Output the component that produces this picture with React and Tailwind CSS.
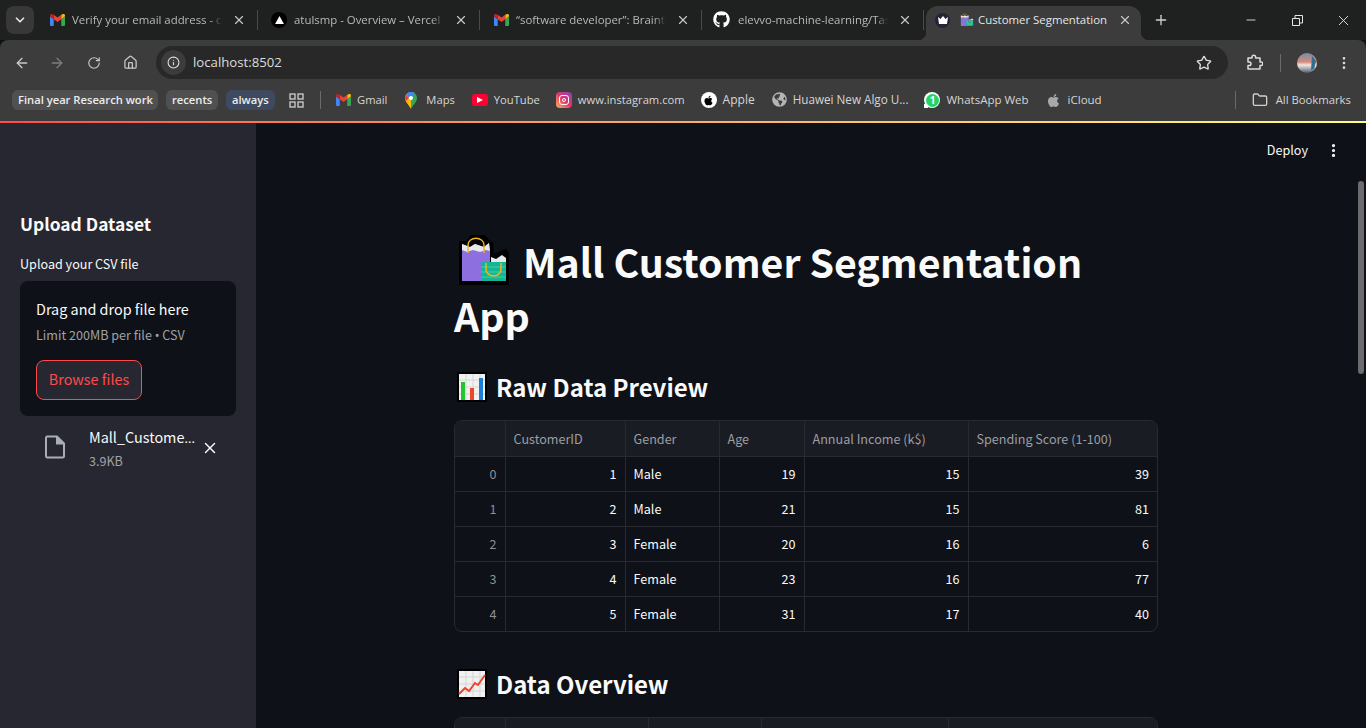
import { ArrowLeft, ArrowRight, ChevronDown, EllipsisVertical, Folder, House, Info, Minus, Plus, RotateCw, Star, X } from "lucide-react";
import { FaApple, FaGithub, FaGlobeAmericas } from "react-icons/fa";

const chromeFont = { fontFamily: '"Open Sans", "Noto Sans", sans-serif' };

function GmailIcon({ size = 15 }) {
  return (
    <svg width={size} height={size * 0.8} viewBox="0 0 20 16" className="shrink-0">
      <path d="M0 3v11.5A1.5 1.5 0 0 0 1.5 16H5V7z" fill="#4285f4" />
      <path d="M15 7v9h3.5a1.5 1.5 0 0 0 1.5-1.5V3z" fill="#34a853" />
      <path d="M15 1v6l5-4V2c0-1.8-2-2.6-3.300-1.600z" fill="#fbbc04" />
      <path d="M5 7V1l5 3.800L15 1v6l-5 3.800z" fill="#ea4335" />
      <path d="M0 2v1l5 4V1L3.300.4C2-.6 0 .2 0 2z" fill="#c5221f" />
    </svg>
  );
}

function VercelIcon() {
  return (
    <span className="w-4 h-4 rounded-full bg-black flex items-center justify-center shrink-0">
      <svg width="9" height="8" viewBox="0 0 10 9"><path d="M5 0l5 9H0z" fill="#fff" /></svg>
    </span>
  );
}

function BagEmoji({ size = 16, outline = false }) {
  return (
    <svg width={size} height={size} viewBox="0 0 50 50" className="shrink-0">
      {outline && <path d="M0 6h7l5-6h14l5 6 3 1 1 12 6-3 6-2 3 4v32H0z" fill="#000" />}
      <path d="M3 9l8 3 5-3 9 3 5-4 1 8v30H3z" fill="#8e6fe0" />
      <path d="M3 9l8 3 5-3 9 3 5-4 1 8-4-1-6 2-7-2-6 2-5-2z" fill="#e8e8ea" />
      <path d="M9 18V10c0-9 16-9 16 0v8" fill="none" stroke="#f2b21b" strokeWidth="1.400" />
      <path d="M32 27v-5l5 2 6-4 4 3v4z" fill="#e8e8ea" />
      <path d="M22 27h25v19H22z" fill="#12b694" />
      <path d="M22 32h25M22 37h25M22 42h25" stroke="#3ccfae" strokeWidth="1.200" />
      <path d="M27 28v6c0 9 15 9 15 0v-6" fill="none" stroke="#f2b21b" strokeWidth="1.600" />
    </svg>
  );
}

function BarEmoji() {
  return (
    <svg width="30" height="30" viewBox="0 0 30 30" className="shrink-0">
      <rect width="30" height="30" fill="#000" />
      <rect x="2" y="2" width="26" height="26" fill="#f1f1f1" />
      <path d="M2 8h26M2 15h26M2 22h26M9 2v26M16 2v26M23 2v26" stroke="#d5d5d5" strokeWidth="1" />
      <rect x="4" y="10" width="4" height="18" fill="#22c52e" />
      <rect x="13" y="16" width="4" height="12" fill="#f0452b" />
      <rect x="22" y="6" width="4" height="22" fill="#1c7ed6" />
    </svg>
  );
}

function LineEmoji() {
  return (
    <svg width="30" height="30" viewBox="0 0 30 30" className="shrink-0">
      <rect width="30" height="30" fill="#000" />
      <rect x="2" y="2" width="26" height="26" fill="#f1f1f1" />
      <path d="M2 8h26M2 15h26M2 22h26M9 2v26M16 2v26M23 2v26" stroke="#d5d5d5" strokeWidth="1" />
      <path d="M2 25l6-6 4 3 6-8 3 2 7-10" fill="none" stroke="#f0452b" strokeWidth="2" />
    </svg>
  );
}

function TabClose() {
  return <X size={14} strokeWidth={2} className="text-[#c7c7c7] shrink-0" />;
}

function Tab({ icon, label }) {
  return (
    <div className="w-[222px] h-[20px] flex items-center border-r border-[#4a4a4a] pl-[13px] pr-[11px] shrink-0">
      <span className="w-[16px] flex justify-center shrink-0">{icon}</span>
      <span className="ml-[7px] flex-1 min-w-0 overflow-hidden whitespace-nowrap text-[11.4px] text-[#b9b9b9] [mask-image:linear-gradient(to_right,#000_92%,transparent)]">
        {label}
      </span>
      <span className="ml-[10px]"><TabClose /></span>
    </div>
  );
}

function TabStrip() {
  return (
    <div className="h-[40px] bg-[#1f2020] flex items-end relative shrink-0" style={chromeFont}>
      <div className="self-start mt-[6px] ml-[6px] w-[28px] h-[28px] rounded-lg bg-[#383838] flex items-center justify-center mr-[2px]">
        <ChevronDown size={14} strokeWidth={3} className="text-[#e3e3e3]" />
      </div>
      <div className="flex items-center h-[40px] pb-[1px]">
        <Tab icon={<GmailIcon />} label="Verify your email address - chatgpt" />
        <Tab icon={<VercelIcon />} label="atulsmp - Overview – Vercel" />
        <Tab icon={<GmailIcon />} label="“software developer”: Braintrust" />
        <Tab icon={<FaGithub size={17} className="text-white -ml-[3px]" />} label="elevvo-machine-learning/Task" />
      </div>
      <div className="relative ml-[2px] w-[215px] h-[34px] bg-[#3c3c3c] rounded-t-xl flex items-center pl-[9px] pr-[9px] pb-[6px] text-[11.4px] text-[#e6e6e6] shrink-0">
        <span className="absolute -left-[8px] bottom-0 w-[8px] h-[8px] bg-[radial-gradient(circle_at_0_0,transparent_8px,#3c3c3c_8.5px)]" />
        <span className="absolute -right-[8px] bottom-0 w-[8px] h-[8px] bg-[radial-gradient(circle_at_100%_0,transparent_8px,#3c3c3c_8.5px)]" />
        <span className="w-[15px] h-[15px] rounded-full bg-[#23243a] flex items-center justify-center shrink-0">
          <svg width="10" height="8" viewBox="0 0 10 8"><path d="M0 1l2.500 2L5 0l2.500 3L10 1 9 8H1z" fill="#fff" /></svg>
        </span>
        <span className="ml-[10px]"><BagEmoji size={14} /></span>
        <span className="ml-[4px] flex-1 whitespace-nowrap">Customer Segmentation</span>
        <TabClose />
      </div>
      <Plus size={16} strokeWidth={2} className="self-center ml-[12px] text-[#d0d0d0]" />
      <div className="ml-auto self-stretch flex items-center text-[#e6e6e6]">
        <span className="w-[46px] flex justify-center"><Minus size={14} strokeWidth={1.500} /></span>
        <span className="w-[46px] flex justify-center">
          <svg width="11" height="11" viewBox="0 0 11 11" fill="none" stroke="currentColor">
            <path d="M.5 3.500h7v7h-7zM3 3V.5h7.500V8H8" />
          </svg>
        </span>
        <span className="w-[46px] flex justify-center"><X size={17} strokeWidth={1.300} /></span>
      </div>
    </div>
  );
}

function NavBar() {
  return (
    <div className="h-[40px] bg-[#3c3c3c] rounded-t-lg flex items-start pt-[6px] text-[#c8c8c8] shrink-0" style={chromeFont}>
      <span className="w-[34px] ml-[5px] h-[33px] flex items-center justify-center"><ArrowLeft size={16} /></span>
      <span className="w-[36px] h-[33px] flex items-center justify-center text-[#7d7d7d]"><ArrowRight size={16} /></span>
      <span className="w-[37px] h-[33px] flex items-center justify-center"><RotateCw size={14} /></span>
      <span className="w-[36px] h-[33px] flex items-center justify-center"><House size={15} /></span>
      <div className="ml-[8px] w-[1072px] h-[33px] bg-[#282828] rounded-full flex items-center pl-[5px] pr-[16px] shrink-0">
        <span className="w-[25px] h-[25px] rounded-full bg-[#3c3c3c] flex items-center justify-center"><Info size={13} className="text-[#dedede]" /></span>
        <span className="ml-[7px] text-[13.2px] text-[#dcdcdc] flex-1">localhost:8502</span>
        <Star size={16} className="text-[#dcdcdc]" />
      </div>
      <span className="ml-[18px] h-[33px] flex items-center text-[#dcdcdc]">
        <svg width="17" height="17" viewBox="0 0 17 17" fill="none" stroke="currentColor" strokeWidth="1.500" strokeLinejoin="round">
          <path d="M2 4h4V3a1.800 1.800 0 0 1 3.600 0v1h4.400v4h1a1.800 1.800 0 0 1 0 3.600h-1V15H2v-3.500h1.200a1.800 1.800 0 0 0 0-3.600H2z" />
        </svg>
      </span>
      <span className="ml-[17px] mt-[8px] h-[18px] border-l border-[#6b6b6b]" />
      <span className="ml-[16px] h-[33px] flex items-center">
        <svg width="20" height="20" viewBox="0 0 20 20">
          <defs>
            <linearGradient id="avatar" x1="0" y1="0" x2="0" y2="1">
              <stop offset="0" stopColor="#6f8fa6" />
              <stop offset="0.45" stopColor="#d98a7c" />
              <stop offset="0.6" stopColor="#f3e6e0" />
              <stop offset="1" stopColor="#4c5d72" />
            </linearGradient>
          </defs>
          <circle cx="10" cy="10" r="10" fill="url(#avatar)" />
          <path d="M15 3l4 5-2 8-3 1z" fill="#2e6f8e" />
        </svg>
      </span>
      <span className="ml-[19px] h-[33px] flex items-center text-[#dcdcdc]"><EllipsisVertical size={16} /></span>
    </div>
  );
}

function Chip({ label, className }) {
  return (
    <span className={`h-[20px] px-[6px] rounded-md flex items-center text-[11.2px] font-semibold text-[#ececec] whitespace-nowrap shrink-0 ${className}`}>
      {label}
    </span>
  );
}

function Mark({ icon, label, className, labelClass = "text-[11.2px]" }) {
  return (
    <span className={`flex items-center gap-[6px] text-[#d6d6d6] whitespace-nowrap shrink-0 ${className}`}>
      {icon}
      <span className={labelClass}>{label}</span>
    </span>
  );
}

function BookmarksBar() {
  return (
    <div className="h-[41px] bg-[#3c3c3c] flex items-center pl-[12px] pb-[1px] shrink-0" style={chromeFont}>
      <Chip label="Final year Research work" className="bg-[#505050] w-[146px]" />
      <Chip label="recents" className="ml-[8px] bg-[#505050] w-[52px]" />
      <Chip label="always" className="ml-[8px] bg-[#3d4a5f] w-[49px]" />
      <svg width="15" height="15" viewBox="0 0 15 15" fill="none" stroke="#cfcfcf" strokeWidth="1.300" className="ml-[14px] shrink-0">
        <rect x="1" y="1" width="5" height="5" />
        <rect x="9" y="1" width="5" height="5" />
        <rect x="1" y="9" width="5" height="5" />
        <rect x="9" y="9" width="5" height="5" />
      </svg>
      <span className="ml-[16px] h-[18px] border-l border-[#6b6b6b]" />
      <Mark className="ml-[15px]" icon={<GmailIcon />} label="Gmail" />
      <Mark
        className="ml-[18px] gap-[9px]"
        icon={
          <svg width="12" height="17" viewBox="0 0 12 17" className="shrink-0">
            <path d="M6 0a6 6 0 0 0-6 6c0 4 4 7 6 11z" fill="#fbbc04" />
            <path d="M6 0a6 6 0 0 1 6 6c0 4-4 7-6 11z" fill="#34a853" />
            <path d="M1 3a6 6 0 0 1 9-2L7 5H3z" fill="#4285f4" />
            <circle cx="6" cy="6" r="2" fill="#fff" />
            <path d="M1 3l3 3-3 3-1-3z" fill="#ea4335" />
          </svg>
        }
        label="Maps"
      />
      <Mark
        className="ml-[17px]"
        icon={
          <span className="w-[16px] h-[12px] rounded-[3px] bg-[#ff0033] flex items-center justify-center shrink-0">
            <svg width="6" height="6" viewBox="0 0 6 6"><path d="M0 0l6 3-6 3z" fill="#fff" /></svg>
          </span>
        }
        label="YouTube"
      />
      <Mark
        className="ml-[16px]"
        icon={
          <span className="w-[16px] h-[16px] rounded-[4px] bg-gradient-to-tr from-[#fcaf45] via-[#e1306c] to-[#833ab4] flex items-center justify-center shrink-0">
            <span className="w-[10px] h-[10px] rounded-[3px] border border-white flex items-center justify-center">
              <span className="w-[4px] h-[4px] rounded-full border border-white" />
            </span>
          </span>
        }
        label="www.instagram.com"
      />
      <Mark
        className="ml-[16px]"
        labelClass="text-[12px]"
        icon={
          <span className="w-[16px] h-[16px] rounded-full bg-white flex items-center justify-center shrink-0">
            <FaApple size={11} className="text-black" />
          </span>
        }
        label="Apple"
      />
      <Mark className="ml-[17px]" labelClass="text-[11.7px]" icon={<FaGlobeAmericas size={15} className="text-[#b5b5b5]" />} label="Huawei New Algo U..." />
      <Mark
        className="ml-[16px]"
        labelClass="text-[11.5px]"
        icon={
          <span className="relative w-[16px] h-[16px] rounded-full bg-white flex items-center justify-center shrink-0">
            <span className="absolute left-0 bottom-0 w-[4px] h-[4px] bg-white" />
            <span className="relative w-[13px] h-[13px] rounded-full bg-[#25d366] flex items-center justify-center text-[10px] font-bold text-white">1</span>
          </span>
        }
        label="WhatsApp Web"
      />
      <Mark className="ml-[17px] gap-[7px]" labelClass="text-[11.5px]" icon={<FaApple size={15} className="text-[#a8a8a8]" />} label="iCloud" />
      <span className="ml-[133px] h-[18px] border-l border-[#6b6b6b]" />
      <Mark className="ml-[16px] gap-[8px]" labelClass="text-[11.3px]" icon={<Folder size={16} className="text-[#cfcfcf]" />} label="All Bookmarks" />
    </div>
  );
}

function Sidebar() {
  return (
    <aside className="w-[256px] h-full bg-[#262730] shrink-0 px-[20px] pt-[87px] text-[#fafafa]">
      <h2 className="text-[17.4px] leading-[28px] font-semibold">Upload Dataset</h2>
      <p className="mt-[16px] text-[12.6px] leading-[20px]">Upload your CSV file</p>
      <div className="mt-[7px] h-[135px] bg-[#0e1117] rounded-lg px-[16px] pt-[16px]">
        <p className="text-[14.4px] leading-[24px]">Drag and drop file here</p>
        <p className="mt-[4px] text-[12.6px] leading-[20px] text-[#a0a2a6]">
          Limit 200MB per file <span className="font-['Noto_Sans']">•</span> CSV
        </p>
        <button className="mt-[14px] w-[106px] h-[40px] pb-[2px] rounded-lg border border-[#ff4b4b] bg-[#262730] text-[14.4px] text-[#ff4b4b]">
          Browse files
        </button>
      </div>
      <div className="mt-[9px] flex items-center pl-[24px]">
        <svg width="22" height="24" viewBox="0 0 22 24" fill="none" stroke="#a9adb8" strokeWidth="2" className="shrink-0 -mt-[2px]">
          <path d="M3 1.500h10l7 7V21a1.500 1.500 0 0 1-1.500 1.500h-15.500A1.500 1.500 0 0 1 2 21V3a1.500 1.500 0 0 1 1-1.500z" />
          <path d="M13 1.500V8.500h7" fill="#a9adb8" />
        </svg>
        <div className="ml-[23px] w-[112px]">
          <p className="text-[14.4px] leading-[24px] whitespace-nowrap">
            Mall_Custome<span className="font-['Noto_Sans'] text-[13px]">...</span>
          </p>
          <p className="mt-[1px] text-[12.6px] leading-[20px] text-[#a0a2a6]">3.9KB</p>
        </div>
        <X size={18} />
      </div>
    </aside>
  );
}

function DataTable({ columns, rows, widths }) {
  return (
    <div className="w-[704px] border border-[#282a31] rounded-lg overflow-hidden">
      <table className="w-full table-fixed border-collapse text-[12.6px]">
        <colgroup>
          {widths.map((w) => (
            <col key={w} style={{ width: w }} />
          ))}
        </colgroup>
        <thead>
          <tr className="h-[35px] bg-[#1a1c24]">
            {columns.map((c, i) => (
              <th
                key={c || "index"}
                className={`px-[8px] pt-[2px] font-normal text-left text-[#9c9ea3] border-b border-[#282a31] ${i > 0 ? "border-l" : ""}`}
              >
                {c}
              </th>
            ))}
          </tr>
        </thead>
        <tbody>
          {rows.map((row, r) => (
            <tr key={row[0]} className="h-[35px]">
              {row.map((cell, i) => (
                <td
                  key={i}
                  className={`px-[8px] pt-[2px] ${i === 0 ? "text-right text-[#8d8f94]" : "border-l border-[#282a31] text-[#fafafa]"} ${typeof cell === "number" && i > 0 ? "text-right" : ""} ${r > 0 ? "border-t border-[#282a31]" : ""}`}
                >
                  {cell}
                </td>
              ))}
            </tr>
          ))}
        </tbody>
      </table>
    </div>
  );
}

const previewRows = [
  [0, 1, "Male", 19, 15, 39],
  [1, 2, "Male", 21, 15, 81],
  [2, 3, "Female", 20, 16, 6],
  [3, 4, "Female", 23, 16, 77],
  [4, 5, "Female", 31, 17, 40],
];

const overviewRows = [
  ["count", 200, 200, 200, 200],
];

function Main() {
  return (
    <main className="relative flex-1 min-w-0 h-full bg-[#0e1117] text-[#fafafa] overflow-hidden">
      <div className="absolute right-[24px] top-[17px] flex items-center">
        <span className="text-[12.6px] leading-[20px]">Deploy</span>
        <EllipsisVertical size={17} strokeWidth={2.500} className="ml-[17px]" />
      </div>
      <div className="absolute right-[2px] top-[58px] w-[6px] h-[193px] bg-[#6b6b6e] rounded-full" />

      <div className="w-[704px] ml-[198px] pt-[111px]">
        <h1 className="text-[39.3px] leading-[54px] font-bold">
          <span className="inline-flex align-[-7px] -my-[10px] ml-[5px] mr-[14px]"><BagEmoji size={50} outline /></span>
          Mall Customer Segmentation App
        </h1>
        <h3 className="mt-[25px] h-[40px] flex items-center pl-[3px] text-[24px] leading-[40px] font-semibold">
          <BarEmoji />
          <span className="ml-[9px]">Raw Data Preview</span>
        </h3>
        <div className="mt-[13px]">
          <DataTable
            columns={["", "CustomerID", "Gender", "Age", "Annual Income (k$)", "Spending Score (1-100)"]}
            rows={previewRows}
            widths={[50, 120, 94, 85, 164, 189]}
          />
        </div>
        <h3 className="mt-[32px] h-[40px] flex items-center pl-[3px] text-[24px] leading-[40px] font-semibold">
          <LineEmoji />
          <span className="ml-[9px]">Data Overview</span>
        </h3>
        <div className="mt-[13px]">
          <DataTable
            columns={["", "CustomerID", "Age", "Annual Income (k$)", "Spending Score (1-100)"]}
            rows={overviewRows}
            widths={[50, 143, 113, 187, 209]}
          />
        </div>
      </div>
    </main>
  );
}

export default function App() {
  return (
    <div className="w-[1366px] h-[728px] overflow-hidden flex flex-col bg-[#0e1117]">
      <TabStrip />
      <NavBar />
      <BookmarksBar />
      <div className="h-[2px] bg-gradient-to-r from-[#ff4b4b] to-[#fffd80] shrink-0" />
      <div
        className="flex-1 min-h-0 flex"
        style={{ fontFamily: '"Noto Sans CJK SC", "Noto Sans", sans-serif' }}
      >
        <Sidebar />
        <Main />
      </div>
    </div>
  );
}
